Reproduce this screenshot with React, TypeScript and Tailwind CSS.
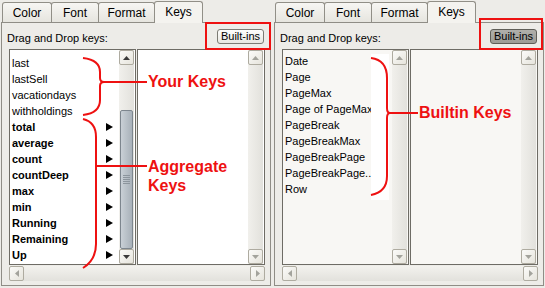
import React from 'react';

// ── Data ──────────────────────────────────────────────────────────────────────

interface KeyItem {
  label: string;
  agg?:  boolean;
}

const YOUR_KEYS: KeyItem[] = [
  { label: 'last' },
  { label: 'lastSell' },
  { label: 'vacationdays' },
  { label: 'withholdings' },
  { label: 'total', agg: true },
  { label: 'average', agg: true },
  { label: 'count', agg: true },
  { label: 'countDeep', agg: true },
  { label: 'max', agg: true },
  { label: 'min', agg: true },
  { label: 'Running', agg: true },
  { label: 'Remaining', agg: true },
  { label: 'Up', agg: true },
];

const BUILTIN_KEYS: KeyItem[] = [
  'Date', 'Page', 'PageMax', 'Page of PageMax', 'PageBreak', 'PageBreakMax',
  'PageBreakPage', 'PageBreakPage...', 'Row',
].map(label => ({ label }));

const TABS = [
  { label: 'Color', w: 'w-[50px]' },
  { label: 'Font',  w: 'w-[48px]' },
  { label: 'Format', w: 'w-[57px]' },
];

// ── Small pieces ──────────────────────────────────────────────────────────────

function Arrow({ dir, disabled }: { dir: 'up' | 'down' | 'left' | 'right'; disabled?: boolean }) {
  const fill = disabled ? '#a3a39c' : '#3a3a3a';
  const pts = {
    up:    '0,4 7,4 3.5,0',
    down:  '0,0 7,0 3.5,4',
    left:  '4,0 4,7 0,3.5',
    right: '0,0 0,7 4,3.5',
  }[dir];
  const vert = dir === 'up' || dir === 'down';
  return (
    <svg width={vert ? 7 : 4} height={vert ? 4 : 7} viewBox={vert ? '0 0 7 4' : '0 0 4 7'}>
      <polygon points={pts} fill={fill} />
    </svg>
  );
}

function ScrollButton({ dir, disabled }: { dir: 'up' | 'down' | 'left' | 'right'; disabled?: boolean }) {
  return (
    <div className="w-[15px] h-[15px] shrink-0 flex items-center justify-center rounded-[2px] border border-[#aeaba0] bg-gradient-to-br from-[#fbfbf9] to-[#e6e4dc]">
      <Arrow dir={dir} disabled={disabled} />
    </div>
  );
}

function VScrollbar({ thumb, disabled }: { thumb?: boolean; disabled?: boolean }) {
  return (
    <div className="w-[15px] h-full flex flex-col bg-gradient-to-r from-[#f1f0ec] to-[#e2e1dc]">
      <ScrollButton dir="up" disabled={disabled} />
      {thumb ? (
        <>
          <div className="h-[45px]" />
          <div className="flex-1 mx-[1px] rounded-[2px] border border-[#7d868e] bg-gradient-to-r from-[#c9d0d6] to-[#a8b1b9] flex flex-col items-center justify-center gap-[1px]">
            {[0, 1, 2, 3, 4].map(i => (
              <div key={i} className="w-[7px] h-[1px] bg-[#8c959d]" />
            ))}
          </div>
        </>
      ) : (
        <div className="flex-1" />
      )}
      <ScrollButton dir="down" disabled={disabled} />
    </div>
  );
}

function AggArrow() {
  return (
    <svg width="7" height="8" viewBox="0 0 7 8">
      <polygon points="0,0 0,8 7,4" fill="#000" />
    </svg>
  );
}

// ── Panel ─────────────────────────────────────────────────────────────────────

interface PanelProps {
  items:    KeyItem[];
  builtin?: boolean;
}

function KeysPanel({ items, builtin }: PanelProps) {
  const listBg = builtin ? 'bg-[#f8f7f4]' : 'bg-white';
  return (
    <div className={`relative shrink-0 h-[288px] bg-[#edece8] flex flex-col ${builtin ? 'w-[273px] pl-[1px]' : 'w-[272px]'}`}>
      {/* tabs */}
      <div className="h-[22px] flex items-end pl-[2px] text-[12px] text-black">
        {TABS.map(t => (
          <div
            key={t.label}
            className={`${t.w} h-[20px] shrink-0 flex items-center justify-center border border-b-0 border-[#918f87] rounded-t-[3px] bg-gradient-to-b from-[#f7f6f3] to-[#e6e5df] -mr-[1px]`}
          >
            {t.label}
          </div>
        ))}
        <div className="w-[49px] h-[22px] shrink-0 flex items-center justify-center border border-b-0 border-[#918f87] rounded-t-[3px] bg-[#f4f3ef] relative top-[1px] z-10 pb-[1px]">
          Keys
        </div>
      </div>

      {/* body */}
      <div className="ml-[1px] w-[270px] h-[264px] border border-[#8f8d86] bg-[#edece8] flex flex-col">
        <div className="h-[26px] flex items-center justify-between pl-[5px] pr-[6px] text-[11px]">
          <span className="pt-[4px]">Drag and Drop keys:</span>
          <div
            className={`h-[15px] w-[47px] mt-[1px] flex items-center justify-center rounded-[3px] border text-[11px] ${
              builtin
                ? 'border-[#5f5e58] bg-gradient-to-b from-[#b0afaa] to-[#9d9c97]'
                : 'border-[#7c7b74] bg-gradient-to-b from-[#fdfdfc] to-[#e8e7e1]'
            }`}
          >
            Built-ins
          </div>
        </div>

        <div className="h-[216px] flex pl-[7px] gap-[1px]">
          <div className={`w-[127px] h-full border border-[#6e6c65] ${listBg} flex`}>
            <div className={`flex-1 ${builtin ? 'pt-[3px]' : 'pt-[5px]'} text-[11px]`}>
              {items.map(it => (
                <div key={it.label} className="h-4 flex items-center justify-between pl-[2px] pr-[6px] leading-4 whitespace-nowrap">
                  <span className={it.agg ? 'font-bold' : ''}>{it.label}</span>
                  {it.agg && <AggArrow />}
                </div>
              ))}
            </div>
            <div className="pr-[1px] h-full">
              <VScrollbar thumb={!builtin} disabled={builtin} />
            </div>
          </div>
          <div className={`w-[128px] h-full border border-[#6e6c65] ${listBg} flex justify-end`}>
            <div className="pr-[1px] h-full">
              <VScrollbar disabled />
            </div>
          </div>
        </div>

        <div className="mt-[1px] ml-[7px] w-[256px] h-[15px] flex bg-gradient-to-b from-[#f3f2ee] to-[#e2e1dc]">
          <ScrollButton dir="left" disabled />
          <div className="flex-1" />
          <ScrollButton dir="right" disabled />
        </div>
      </div>

      {/* annotation overlay */}
      {builtin ? (
        <>
          <div className="absolute left-[207px] top-[18px] w-[64px] h-[32px] border-2 border-[#ee1111]" />
          <svg className="absolute inset-0 pointer-events-none" width="273" height="288">
            <rect x="99" y="54" width="18" height="146" fill="#fff" />
            <path
              d="M99 58 Q115 60 115 78 L115 108 Q115 113 118 113 L146 113 M118 113 Q115 113 115 118 L115 176 Q115 192 99 195"
              fill="none" stroke="#ee1111" strokeWidth="2"
            />
          </svg>
          <span className="absolute left-[147px] top-[103px] text-[16px] font-bold text-[#ee1111] leading-5">Builtin Keys</span>
        </>
      ) : (
        <>
          <div className="absolute left-[205px] top-[22px] w-[66px] h-[28px] border-2 border-[#ee1111]" />
          <svg className="absolute inset-0 pointer-events-none" width="272" height="288">
            <path
              d="M83 58 Q100 60 100 72 L100 78 Q100 82 104 82 L147 82 M104 82 Q100 82 100 86 L100 100 Q100 113 83 115"
              fill="none" stroke="#ee1111" strokeWidth="2"
            />
            <path
              d="M83 119 Q96 122 96 137 L96 166 L147 166 M96 166 L96 244 Q96 260 83 268"
              fill="none" stroke="#ee1111" strokeWidth="2"
            />
          </svg>
          <span className="absolute left-[148px] top-[72px] text-[16px] font-bold text-[#ee1111] leading-5">Your Keys</span>
          <span className="absolute left-[148px] top-[157px] text-[16px] font-bold text-[#ee1111] leading-[19px]">
            Aggregate<br />Keys
          </span>
        </>
      )}
    </div>
  );
}

// ── App ───────────────────────────────────────────────────────────────────────

export default function App() {
  return (
    <div className="w-[545px] h-[288px] flex bg-[#edece8] text-black overflow-hidden" style={{ fontFamily: '"Liberation Sans", Arial, sans-serif' }}>
      <KeysPanel items={YOUR_KEYS} />
      <KeysPanel items={BUILTIN_KEYS} builtin />
    </div>
  );
}
